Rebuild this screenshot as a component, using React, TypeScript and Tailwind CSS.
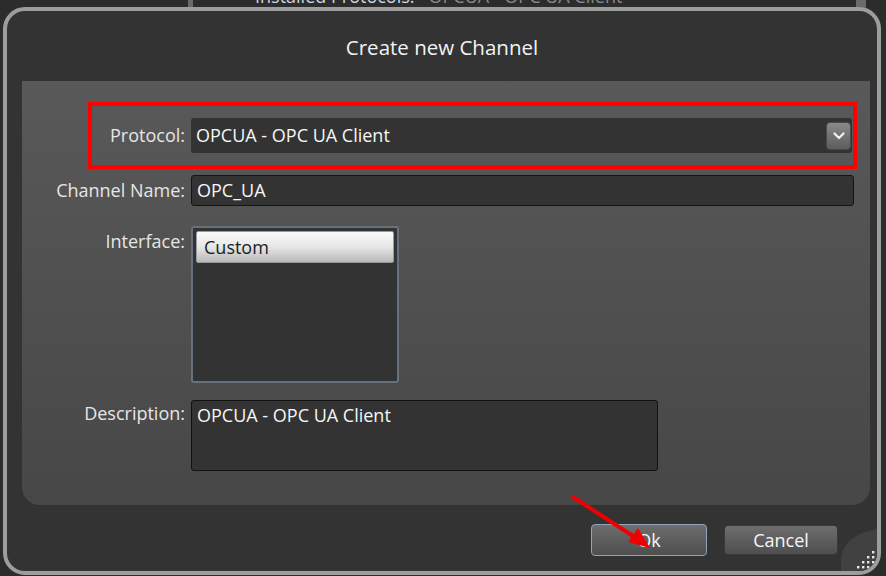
import React from "react";

const FONT = { fontFamily: '"Open Sans", "Noto Sans", sans-serif' };

function Chevron() {
  return (
    <svg width="12" height="8" viewBox="0 0 12 8" fill="none">
      <path d="M1.5 1.5 L6 6 L10.5 1.5" stroke="#f2f2f2" strokeWidth="2.2" strokeLinecap="round" strokeLinejoin="round" />
    </svg>
  );
}

function Grip() {
  const dots: [number, number][] = [];
  for (let r = 0; r < 4; r++) {
    for (let c = 3 - r; c < 4; c++) {
      dots.push([c * 5 + 4, r * 5 + 4]);
    }
  }
  return (
    <svg width="36" height="42" viewBox="0 0 36 42">
      <path d="M36 0 L36 42 L0 42 L0 30 Q2 6 36 0 Z" fill="#414141" />
      {dots.map(([x, y], i) => (
        <rect key={i} x={x + 12} y={y + 18} width="2.4" height="2.4" fill="#e8e8e8" />
      ))}
    </svg>
  );
}

function RedArrow() {
  return (
    <svg className="pointer-events-none absolute left-0 top-0" width="886" height="576">
      <line x1="573" y1="497" x2="636" y2="538" stroke="#f00000" strokeWidth="4" strokeLinecap="round" />
      <polygon points="650,548 628,542 638,528" fill="#f00000" />
    </svg>
  );
}

export default function App() {
  return (
    <div className="relative h-[576px] w-[886px] overflow-hidden bg-[#2c2c2c]" style={FONT}>
      {/* window behind the dialog, mostly hidden */}
      <div className="absolute left-[255px] top-[-14px] flex gap-[14px] text-[18px] leading-[20px]">
        <span className="text-[#c9d6e4]">Installed Protocols:</span>
        <span className="text-[#8a8a8a]">OPCUA - OPC UA Client</span>
      </div>
      <div className="absolute left-[188px] top-0 h-[8px] w-[5px] bg-[#6a6a6a]" />
      <div className="absolute left-[856px] top-0 h-[8px] w-[10px] bg-[#6a6a6a]" />

      <div className="ml-[3px] pt-[7px]">
        <div className="relative flex h-[568px] w-[878px] flex-col rounded-[22px] border-4 border-[#9d9d9d] bg-[#333333]">
          <div className="flex h-[70px] items-center justify-center pt-[3px] text-[20.5px] text-[#f2f2f2]">
            Create new Channel
          </div>

          <div className="ml-[15px] mr-[7px] flex h-[424px] flex-col rounded-b-[18px] bg-gradient-to-b from-[#595959] to-[#474747]">
            {/* Protocol */}
            <div className="ml-[66px] mr-[13px] mt-[21px] flex items-center gap-[6px] border-4 border-[#ff0000] py-[12px] pr-[1px]">
              <div className="w-[93px] text-right text-[18px] text-[#e6e6e6]">Protocol:</div>
              <div className="flex h-[35px] flex-1 items-center justify-between rounded-[3px] bg-[#333333] pl-[5px] pr-[1px]">
                <span className="text-[18px] text-[#f6f6f6]">OPCUA - OPC UA Client</span>
                <div className="flex h-[28px] w-[25px] items-center justify-center rounded-[4px] border border-[#4a4a4a] bg-gradient-to-b from-[#8a8a8a] to-[#5c5c5c]">
                  <Chevron />
                </div>
              </div>
            </div>

            {/* Channel Name */}
            <div className="ml-[8px] mr-[16px] mt-[6px] flex items-center gap-[6px]">
              <div className="w-[155px] text-right text-[18px] text-[#e6e6e6]">Channel Name:</div>
              <div className="flex h-[31px] flex-1 items-center rounded-[3px] border border-[#151515] bg-[#333333] pl-[5px] text-[18px] text-[#f6f6f6]">
                OPC_UA
              </div>
            </div>

            {/* Interface */}
            <div className="ml-[8px] mt-[20px] flex items-start gap-[6px]">
              <div className="w-[155px] pt-[2px] text-right text-[18px] text-[#e6e6e6]">Interface:</div>
              <div className="h-[157px] w-[208px] rounded-[3px] border-2 border-[#66717c] bg-[#333333] p-[3px]">
                <div className="flex h-[32px] items-center rounded-[2px] border border-[#9a9a9a] bg-gradient-to-b from-[#fbfbfb] via-[#e6e6e6] to-[#b9b9b9] pl-[7px] text-[18px] text-[#1c1c1c]">
                  Custom
                </div>
              </div>
            </div>

            {/* Description */}
            <div className="ml-[8px] mt-[17px] flex items-start gap-[6px]">
              <div className="w-[155px] text-right text-[18px] text-[#e6e6e6]">Description:</div>
              <div className="h-[71px] w-[467px] rounded-[3px] border border-[#111111] bg-[#333333] pl-[5px] pt-[1px] text-[18px] text-[#f6f6f6]">
                OPCUA - OPC UA Client
              </div>
            </div>
          </div>

          {/* Buttons */}
          <div className="mt-[19px] flex justify-end gap-[17px] pr-[39px]">
            <button className="flex h-[32px] w-[116px] items-center justify-center rounded-[4px] border border-[#8ea4bc] bg-gradient-to-b from-[#6e6e6e] to-[#4e4e4e] text-[18px] text-[#f6f6f6]">
              Ok
            </button>
            <button className="mt-[1px] flex h-[30px] w-[114px] items-center justify-center rounded-[4px] border border-[#3a3a3a] bg-gradient-to-b from-[#6e6e6e] to-[#4e4e4e] text-[18px] text-[#f6f6f6]">
              Cancel
            </button>
          </div>

          <div className="absolute bottom-0 right-0 overflow-hidden rounded-br-[18px]">
            <Grip />
          </div>
        </div>
      </div>

      <RedArrow />
    </div>
  );
}
